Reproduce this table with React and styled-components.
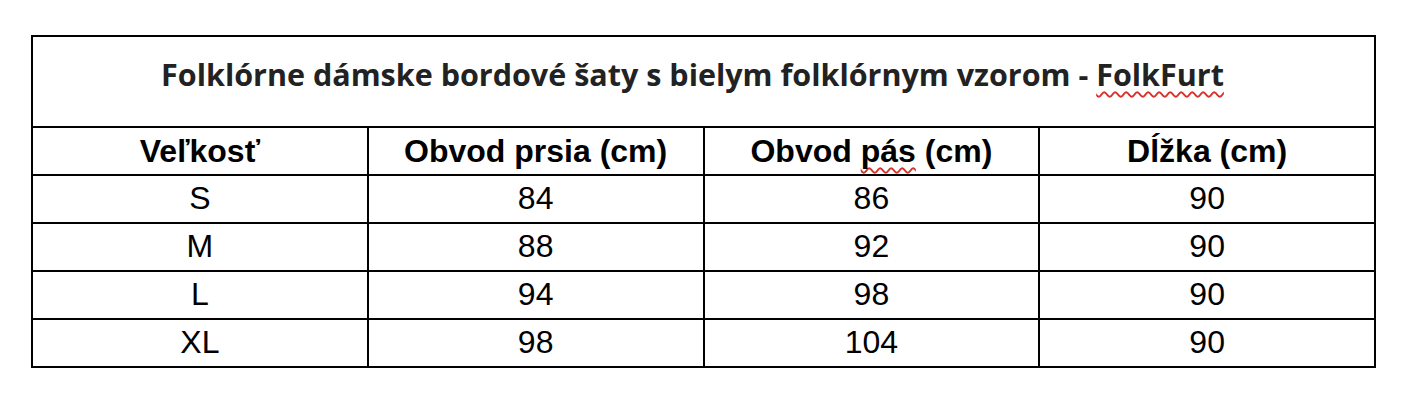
import React from "react";
import styled, { createGlobalStyle } from "styled-components";

const Global = createGlobalStyle`
  html, body { margin: 0; padding: 0; background: #fff; }
  body { font-family: "Liberation Sans", Arial, sans-serif; }
`;

const Page = styled.div`
  width: 1410px;
  height: 412px;
  padding: 35px 0 0 31px;
  box-sizing: border-box;
`;

const Grid = styled.div`
  width: 1345px;
  box-sizing: border-box;
  display: grid;
  grid-template-columns: repeat(4, 1fr);
  grid-template-rows: 89px repeat(5, 46px);
  gap: 2px;
  padding: 2px;
  background: #000;
`;

const TitleCell = styled.div`
  grid-column: 1 / -1;
  background: #fff;
  display: flex;
  justify-content: center;
  align-items: flex-start;
  padding: 17px 22px 0 0;
  box-sizing: border-box;
  font-family: "Open Sans", "Noto Sans", sans-serif;
  font-weight: 700;
  font-size: 30.5px;
  line-height: 40px;
  color: #222;
`;

const Cell = styled.div`
  background: #fff;
  display: flex;
  justify-content: center;
  align-items: center;
  font-family: "Liberation Sans", Arial, sans-serif;
  font-size: 32px;
  line-height: 36px;
  font-weight: ${(p) => (p.$head ? 700 : 400)};
  color: #000;
  padding-bottom: ${(p) => (p.$head ? 0 : 3)}px;
  box-sizing: border-box;
`;

const Misspelled = styled.span`
  text-decoration: underline wavy #d8302a;
  text-decoration-thickness: 1.5px;
  text-underline-offset: 5px;
  text-decoration-skip-ink: none;
`;

const rows = [
  ["S", "84", "86", "90"],
  ["M", "88", "92", "90"],
  ["L", "94", "98", "90"],
  ["XL", "98", "104", "90"],
];

export default function App() {
  return (
    <>
      <Global />
      <Page>
        <Grid>
          <TitleCell>
            <span>
              Folklórne dámske bordové šaty s bielym folklórnym vzorom -{" "}
              <Misspelled>FolkFurt</Misspelled>
            </span>
          </TitleCell>
          <Cell $head>Veľkosť</Cell>
          <Cell $head>Obvod prsia (cm)</Cell>
          <Cell $head>
            <span>
              Obvod <Misspelled>pás</Misspelled> (cm)
            </span>
          </Cell>
          <Cell $head>Dĺžka (cm)</Cell>
          {rows.map((r) =>
            r.map((v, i) => <Cell key={r[0] + i}>{v}</Cell>)
          )}
        </Grid>
      </Page>
    </>
  );
}
